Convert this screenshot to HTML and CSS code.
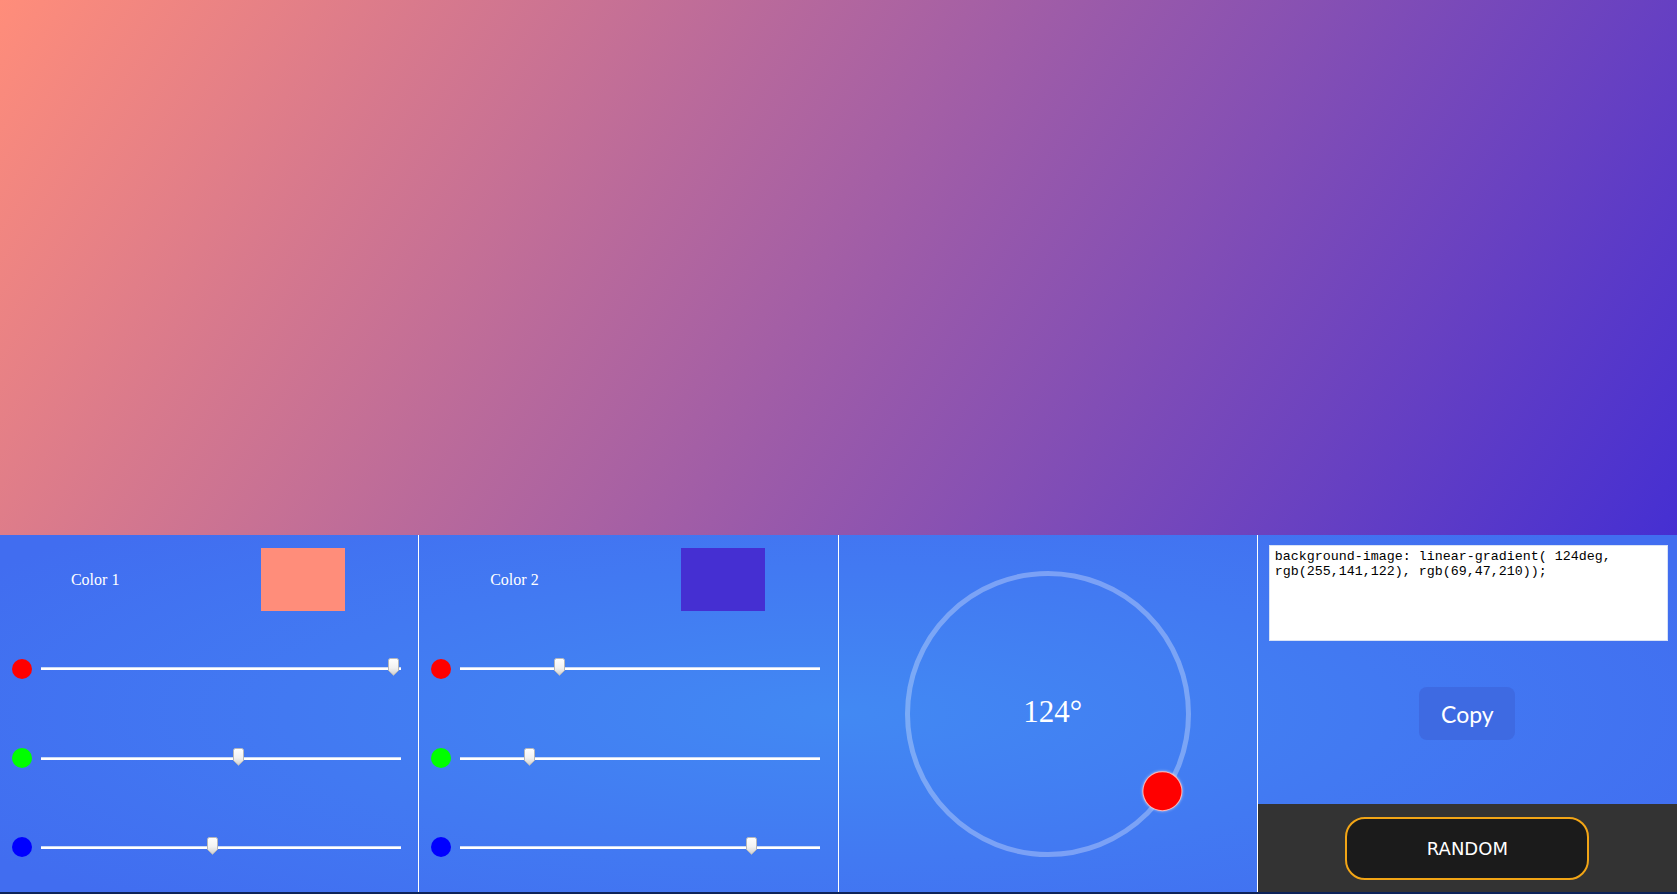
FILE: index.html
```html
<!DOCTYPE html>
<html lang="en">
<head>
<meta charset="utf-8">
<title>Gradient Generator</title>
<link rel="stylesheet" href="styles.css">
</head>
<body>
<div class="page">
  <div class="preview"></div>
  <div class="controls">
    <section class="col color-col">
      <div class="color-head">
        <span class="color-label">Color 1</span>
        <div class="swatch swatch-1"></div>
      </div>
      <div class="slider-row">
        <span class="dot dot-r"></span>
        <div class="track"><svg class="thumb" style="left:347px" width="11" height="18" viewBox="0 0 11 18"><defs><linearGradient id="tg1" x1="0" y1="0" x2="0" y2="1"><stop offset="0" stop-color="#ffffff"/><stop offset="0.55" stop-color="#f2f2f2"/><stop offset="1" stop-color="#cfcfcf"/></linearGradient></defs><path d="M0.5 2.5 Q0.5 0.5 2.5 0.5 H8.5 Q10.5 0.5 10.5 2.5 V12.5 L5.5 17.3 L0.5 12.5 Z" fill="url(#tg1)" stroke="#b7b7b7" stroke-width="1"/></svg></div>
      </div>
      <div class="slider-row">
        <span class="dot dot-g"></span>
        <div class="track"><svg class="thumb" style="left:192px" width="11" height="18" viewBox="0 0 11 18"><path d="M0.5 2.5 Q0.5 0.5 2.5 0.5 H8.5 Q10.5 0.5 10.5 2.5 V12.5 L5.5 17.3 L0.5 12.5 Z" fill="url(#tg1)" stroke="#b7b7b7" stroke-width="1"/></svg></div>
      </div>
      <div class="slider-row">
        <span class="dot dot-b"></span>
        <div class="track"><svg class="thumb" style="left:166px" width="11" height="18" viewBox="0 0 11 18"><path d="M0.5 2.5 Q0.5 0.5 2.5 0.5 H8.5 Q10.5 0.5 10.5 2.5 V12.5 L5.5 17.3 L0.5 12.5 Z" fill="url(#tg1)" stroke="#b7b7b7" stroke-width="1"/></svg></div>
      </div>
    </section>

    <section class="col color-col">
      <div class="color-head">
        <span class="color-label">Color 2</span>
        <div class="swatch swatch-2"></div>
      </div>
      <div class="slider-row">
        <span class="dot dot-r"></span>
        <div class="track"><svg class="thumb" style="left:94px" width="11" height="18" viewBox="0 0 11 18"><path d="M0.5 2.5 Q0.5 0.5 2.5 0.5 H8.5 Q10.5 0.5 10.5 2.5 V12.5 L5.5 17.3 L0.5 12.5 Z" fill="url(#tg1)" stroke="#b7b7b7" stroke-width="1"/></svg></div>
      </div>
      <div class="slider-row">
        <span class="dot dot-g"></span>
        <div class="track"><svg class="thumb" style="left:64px" width="11" height="18" viewBox="0 0 11 18"><path d="M0.5 2.5 Q0.5 0.5 2.5 0.5 H8.5 Q10.5 0.5 10.5 2.5 V12.5 L5.5 17.3 L0.5 12.5 Z" fill="url(#tg1)" stroke="#b7b7b7" stroke-width="1"/></svg></div>
      </div>
      <div class="slider-row">
        <span class="dot dot-b"></span>
        <div class="track"><svg class="thumb" style="left:286px" width="11" height="18" viewBox="0 0 11 18"><path d="M0.5 2.5 Q0.5 0.5 2.5 0.5 H8.5 Q10.5 0.5 10.5 2.5 V12.5 L5.5 17.3 L0.5 12.5 Z" fill="url(#tg1)" stroke="#b7b7b7" stroke-width="1"/></svg></div>
      </div>
    </section>

    <section class="col angle-col">
      <div class="dial">
        <span class="angle-value">124°</span>
        <div class="knob-arm" style="transform: rotate(124deg)"><span class="knob"></span></div>
      </div>
    </section>

    <section class="col output-col">
      <textarea class="css-out" spellcheck="false">background-image: linear-gradient( 124deg, rgb(255,141,122), rgb(69,47,210));</textarea>
      <div class="copy-area">
        <button class="copy-btn">Copy</button>
      </div>
      <div class="random-bar">
        <button class="random-btn">RANDOM</button>
      </div>
    </section>
  </div>
</div>
</body>
</html>
```

FILE: styles.css
```css
* {
  box-sizing: border-box;
}

html, body {
  margin: 0;
  padding: 0;
}

body {
  background: #0d2359;
  overflow: hidden;
  font-family: "Liberation Serif", "Times New Roman", serif;
}

.page {
  display: flex;
  flex-direction: column;
  height: 892px;
}

.preview {
  height: 535px;
  background-image: linear-gradient(124deg, rgb(255,141,122), rgb(69,47,210));
}

.controls {
  flex: 1;
  display: grid;
  grid-template-columns: 1fr 1fr 1fr 1fr;
  background: radial-gradient(ellipse 60% 75% at 50% 50%, #4289f3 0%, #4279f2 55%, #416df0 100%);
}

.col {
  border-right: 1px solid #ffffff;
  min-width: 0;
}

.col:last-child {
  border-right: none;
}

/* colour columns */
.color-col {
  display: grid;
  grid-template-rows: repeat(4, 1fr);
}

.color-head {
  display: flex;
  justify-content: space-around;
  align-items: center;
  padding-right: 2px;
}

.color-label {
  color: #ffffff;
  font-size: 16px;
}

.swatch {
  width: 84px;
  height: 63px;
}

.swatch-1 {
  background: rgb(255,141,122);
}

.swatch-2 {
  background: rgb(69,47,210);
}

.slider-row {
  display: flex;
  align-items: center;
  padding-left: 12px;
  gap: 9px;
}

.dot {
  width: 20px;
  height: 20px;
  border-radius: 50%;
  flex: none;
}

.dot-r { background: #ff0000; }
.dot-g { background: #00ff00; }
.dot-b { background: #0000ff; }

.track {
  position: relative;
  width: 360px;
  height: 3px;
  background: #ffffff;
  border-top: 1px solid #c9d9f5;
}

.thumb {
  position: absolute;
  top: -10px;
  display: block;
}

/* angle column */
.angle-col {
  display: flex;
  align-items: center;
  justify-content: center;
}

.dial {
  position: relative;
  width: 286px;
  height: 286px;
  border: 5px solid rgba(255,255,255,0.3);
  border-radius: 50%;
  display: flex;
  align-items: center;
  justify-content: center;
}

.angle-value {
  color: #ffffff;
  font-size: 31px;
  margin-left: 10px;
  margin-bottom: 3px;
}

.knob-arm {
  position: absolute;
  left: 50%;
  top: 50%;
  width: 0;
  height: 0;
}

.knob {
  position: absolute;
  left: -20px;
  top: -158px;
  width: 40px;
  height: 40px;
  border-radius: 50%;
  background: #ff0000;
  border: 1px solid rgba(255,200,200,0.9);
  box-shadow: 0 0 3px rgba(255,255,255,0.6);
}

/* output column */
.output-col {
  display: flex;
  flex-direction: column;
}

.css-out {
  display: block;
  width: 399px;
  height: 96px;
  margin: 10px 9px 0 11px;
  padding: 3px 5px;
  border: 1px solid #d9e2f5;
  background: #ffffff;
  color: #000000;
  font-family: "Liberation Mono", "Courier New", monospace;
  font-size: 13.33px;
  line-height: 15px;
  resize: none;
  overflow: hidden;
  outline: none;
}

.copy-area {
  flex: 1;
  display: flex;
  justify-content: center;
  align-items: flex-start;
  padding-top: 46px;
}

.copy-btn {
  width: 96px;
  height: 53px;
  border: none;
  border-radius: 8px;
  background: #3e6ae2;
  color: #ffffff;
  font-family: Lato, "Open Sans", sans-serif;
  font-size: 23px;
  padding: 0;
  cursor: pointer;
}

.random-bar {
  height: 88px;
  background: #333333;
  display: flex;
  align-items: center;
  justify-content: center;
}

.random-btn {
  width: 244px;
  height: 63px;
  border: 2px solid #f2a516;
  border-radius: 20px;
  background: #1b1b1b;
  color: #ffffff;
  font-family: "DejaVu Sans", Verdana, sans-serif;
  font-size: 18px;
  padding: 0;
  cursor: pointer;
}
```
